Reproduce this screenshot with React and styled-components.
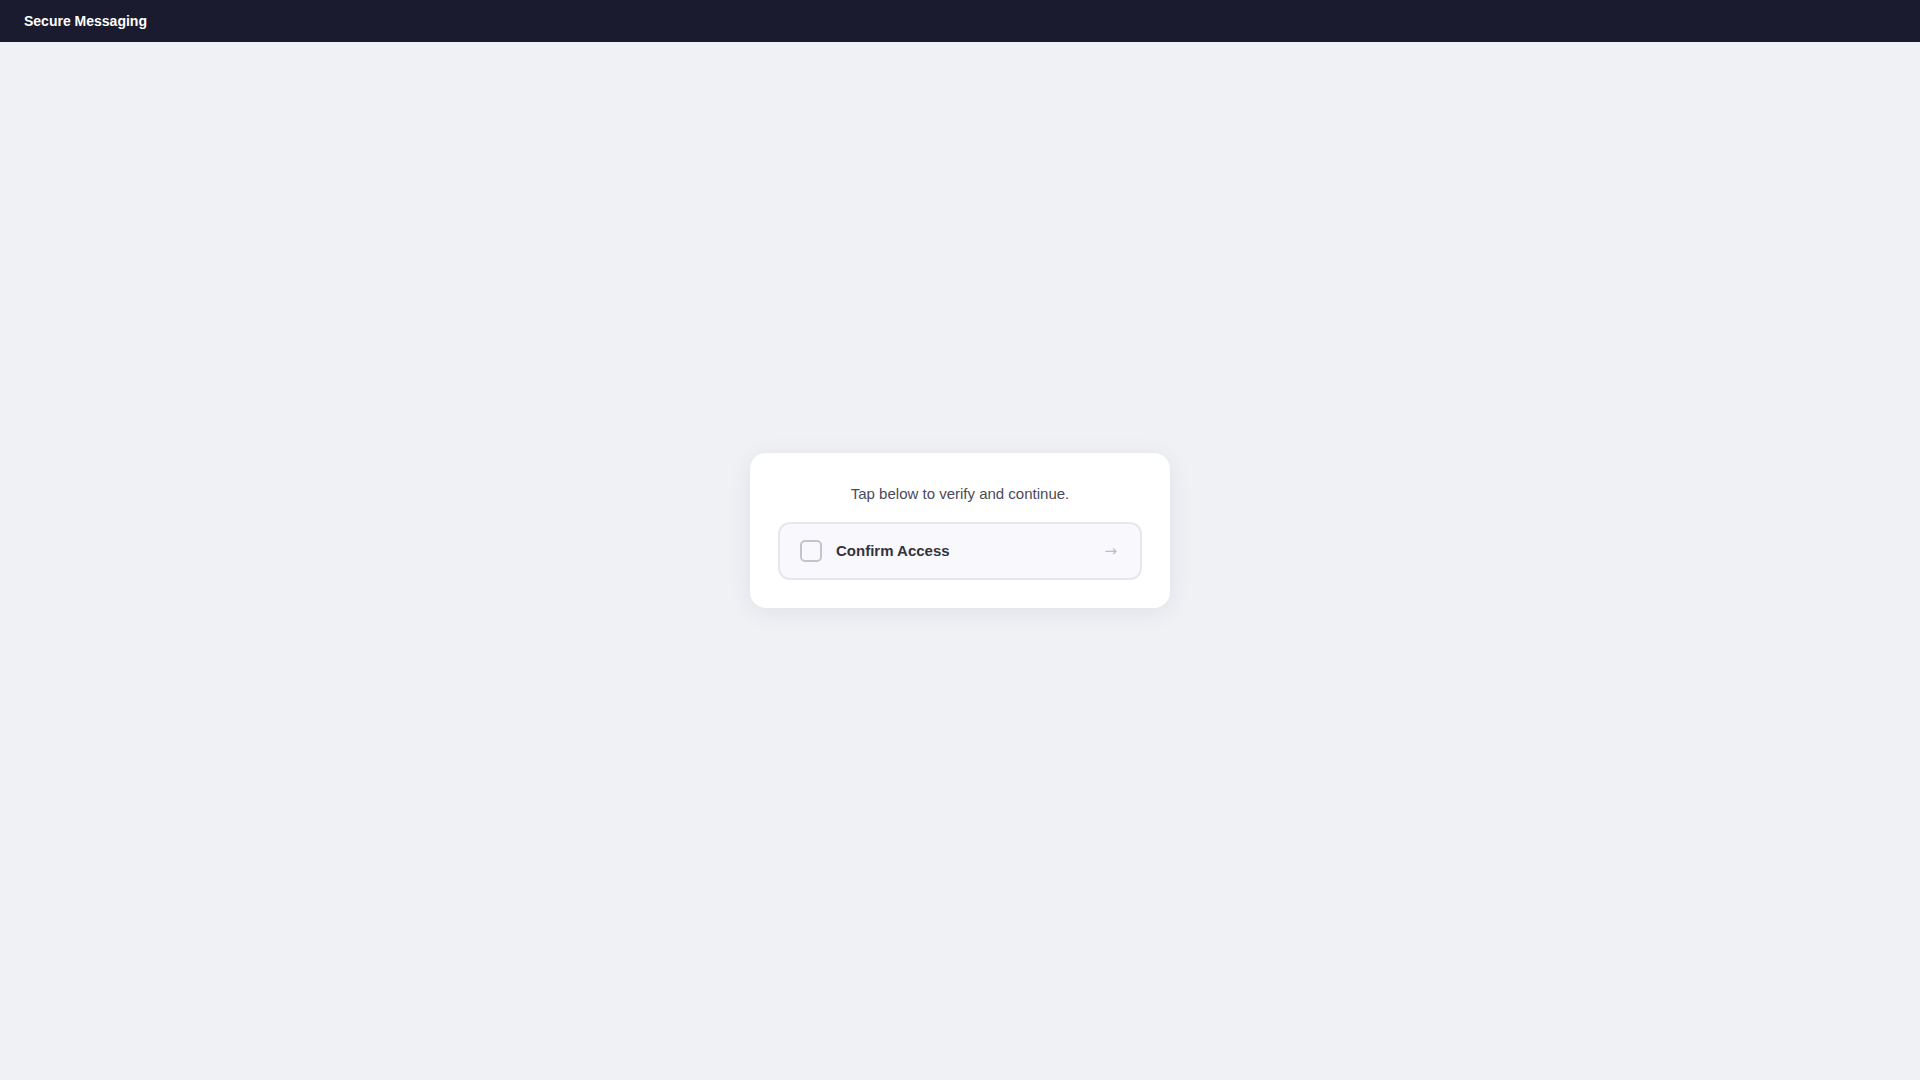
import React from "react";
import styled, { createGlobalStyle } from "styled-components";

const GlobalStyle = createGlobalStyle`
  * { box-sizing: border-box; }
  html, body { margin: 0; padding: 0; }
  body {
    background: #f0f1f5;
    font-family: "Liberation Sans", Arial, sans-serif;
  }
`;

const Page = styled.div`
  min-height: 100vh;
  display: flex;
  flex-direction: column;
  background: #f0f1f5;
`;

const Header = styled.header`
  height: 42px;
  background: #1b1b2f;
  display: flex;
  align-items: center;
  padding: 0 24px;
`;

const Brand = styled.div`
  color: #ffffff;
  font-size: 14px;
  font-weight: 700;
`;

const Main = styled.main`
  flex: 1;
  display: flex;
  align-items: center;
  justify-content: center;
  padding-bottom: 62px;
`;

const Card = styled.div`
  width: 420px;
  background: #ffffff;
  border-radius: 16px;
  padding: 29px 28px 28px;
  box-shadow: 0 4px 24px rgba(30, 30, 60, 0.07);
`;

const Prompt = styled.p`
  margin: 0 0 16px;
  text-align: center;
  font-size: 15px;
  line-height: 24px;
  color: #4a4a5a;
`;

const ConfirmButton = styled.button`
  width: 100%;
  height: 58px;
  display: flex;
  align-items: center;
  gap: 14px;
  padding: 0 23px 0 20px;
  background: #f9f9fd;
  border: 2px solid #e6e6ee;
  border-radius: 12px;
  cursor: pointer;
  font-family: inherit;
`;

const Box = styled.span`
  width: 22px;
  height: 22px;
  flex-shrink: 0;
  border: 2px solid #c4c4ce;
  border-radius: 5px;
  background: #f9f9fd;
`;

const Label = styled.span`
  flex: 1;
  text-align: left;
  font-size: 15px;
  font-weight: 700;
  color: #33333f;
`;

const Arrow = styled.span`
  font-size: 15px;
  color: #bdbbcb;
  font-family: "DejaVu Sans", sans-serif;
`;

export default function App() {
  return (
    <>
      <GlobalStyle />
      <Page>
        <Header>
          <Brand>Secure Messaging</Brand>
        </Header>
        <Main>
          <Card>
            <Prompt>Tap below to verify and continue.</Prompt>
            <ConfirmButton type="button">
              <Box />
              <Label>Confirm Access</Label>
              <Arrow>→</Arrow>
            </ConfirmButton>
          </Card>
        </Main>
      </Page>
    </>
  );
}
